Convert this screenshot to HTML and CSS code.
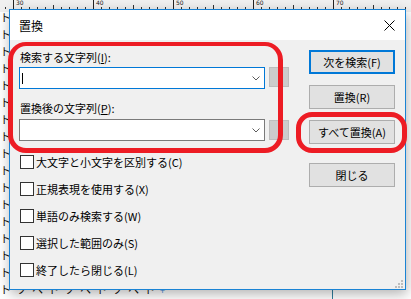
FILE: index.html
```html
<!DOCTYPE html>
<html>
<head>
    <title>置換</title>
    <link rel="stylesheet" href="styles.css">
</head>
<body>
    <div class="desk">
        <div class="ruler">
            <div class="ruler-seg"><span>30</span></div>
            <div class="ruler-seg"><span>40</span></div>
            <div class="ruler-seg"><span>50</span></div>
            <div class="ruler-seg"><span>60</span></div>
            <div class="ruler-seg"><span>70</span></div>
        </div>
        <div class="doc">
            <p>ト</p>
            <p>ト</p>
            <p>ト</p>
            <p>ト</p>
            <p>ト</p>
            <p>ト</p>
            <p>ト</p>
            <p>ト</p>
            <p>ト</p>
            <p>ト</p>
            <p>ト</p>
            <p>ト</p>
            <p>ト</p>
            <p>ト</p>
            <p>ト</p>
            <p>ト</p>
            <p>トソヘトソヘトソヘト<span class="plus">+</span></p>
        </div>

        <div class="dialog">
            <div class="titlebar">
                <span class="title">置換</span>
                <svg class="close" width="11" height="11" viewBox="0 0 11 11">
                    <path d="M0.5 0.5L10.5 10.5M10.5 0.5L0.5 10.5" stroke="#000" stroke-width="1" fill="none"/>
                </svg>
            </div>
            <div class="dlg-body">
                <div class="fields">
                    <div class="field-label">検索する文字列(<u>I</u>):</div>
                    <div class="combo-row">
                        <div class="combo combo-focus">
                            <span class="caret"></span>
                            <svg class="chevron" width="8" height="5" viewBox="0 0 8 5"><path d="M0.5 0.5L4 4L7.5 0.5" stroke="#5c5c5c" fill="none"/></svg>
                        </div>
                        <div class="mini"><span class="mini-glyph"></span></div>
                    </div>
                    <div class="field-label second">置換後の文字列(<u>P</u>):</div>
                    <div class="combo-row">
                        <div class="combo">
                            <svg class="chevron" width="8" height="5" viewBox="0 0 8 5"><path d="M0.5 0.5L4 4L7.5 0.5" stroke="#5c5c5c" fill="none"/></svg>
                        </div>
                        <div class="mini lower"><span class="mini-glyph"></span></div>
                    </div>
                    <ul class="opts">
                        <li><span class="check"></span>大文字と小文字を区別する(C)</li>
                        <li><span class="check"></span>正規表現を使用する(X)</li>
                        <li><span class="check"></span>単語のみ検索する(W)</li>
                        <li><span class="check"></span>選択した範囲のみ(S)</li>
                        <li><span class="check"></span>終了したら閉じる(L)</li>
                    </ul>
                </div>
                <div class="actions">
                    <button class="btn btn-default">次を検索(F)</button>
                    <button class="btn">置換(R)</button>
                    <button class="btn">すべて置換(A)</button>
                    <button class="btn btn-close">閉じる</button>
                </div>
                <svg class="grip" width="8" height="8" viewBox="0 0 8 8">
                    <rect x="6" y="0" width="2" height="2" fill="#bdbdbd"/>
                    <rect x="3" y="3" width="2" height="2" fill="#bdbdbd"/>
                    <rect x="6" y="3" width="2" height="2" fill="#bdbdbd"/>
                    <rect x="0" y="6" width="2" height="2" fill="#bdbdbd"/>
                    <rect x="3" y="6" width="2" height="2" fill="#bdbdbd"/>
                    <rect x="6" y="6" width="2" height="2" fill="#bdbdbd"/>
                </svg>
            </div>
        </div>

        <!-- red hand-drawn highlights -->
        <div class="mark mark-find"></div>
        <div class="mark mark-all"></div>
    </div>
</body>
</html>
```

FILE: styles.css
```css
body {
    margin: 0;
    font-family: "Noto Sans CJK JP", "Noto Sans", sans-serif;
    font-size: 11px;
    color: #000;
    background: #fff;
}
.desk {
    position: relative;
    width: 411px;
    height: 299px;
    overflow: hidden;
}
.ruler {
    display: flex;
    height: 12px;
    padding-left: 13px;
    overflow: hidden;
    background-color: #f0f0f0;
    background-image: repeating-linear-gradient(to right, #333 0 1px, transparent 1px 8px);
    background-size: 100% 2px;
    background-position: 5px 7px;
    background-repeat: no-repeat;
}
.ruler-seg {
    flex: 0 0 79px;
    border-left: 1px solid #222;
    background-image: linear-gradient(#333, #333);
    background-size: 1px 4px;
    background-position: 39px 5px;
    background-repeat: no-repeat;
}
.ruler-seg span {
    display: block;
    margin-left: 2px;
    font-family: "DejaVu Sans", sans-serif;
    font-size: 6px;
    line-height: 6px;
    color: #222;
}
.doc {
    margin-top: -3px;
    height: 290px;
    background: linear-gradient(#2f7f9f, #2f7f9f) no-repeat 332px 0 / 1px 100%;
}
.doc p {
    margin: 0;
    height: 17px;
    line-height: 17px;
    font-size: 11px;
    letter-spacing: 5px;
    white-space: nowrap;
    color: #111;
}
.plus {
    color: #3b8de0;
    font-size: 9px;
}

.dialog {
    position: absolute;
    left: 9px;
    top: 9px;
    width: 395px;
    height: 279px;
    border: 1px solid #1a83d4;
    background: #f0f0f0;
    box-shadow: 1px 4px 12px rgba(0, 0, 0, 0.3);
    display: flex;
    flex-direction: column;
}
.titlebar {
    height: 30px;
    background: #fff;
    display: flex;
    align-items: center;
    justify-content: space-between;
    padding: 0 10px 0 9px;
}
.title {
    font-size: 12px;
    line-height: 14px;
    margin-top: 1px;
}
.dlg-body {
    position: relative;
    flex: 1;
    display: flex;
    padding: 10px 10px 0 9px;
    gap: 20px;
}
.fields {
    width: 270px;
}
.field-label {
    height: 14px;
    line-height: 14px;
    padding-left: 1px;
    margin-bottom: 3px;
}
.field-label.second {
    margin-top: 12px;
    margin-bottom: 4px;
}
.field-label u {
    text-underline-offset: 1px;
}
.combo-row {
    display: flex;
    gap: 4px;
    align-items: flex-start;
}
.combo {
    box-sizing: border-box;
    width: 246px;
    height: 22px;
    border: 1px solid #7a7a7a;
    background: #fff;
    display: flex;
    align-items: center;
    justify-content: space-between;
    padding: 0 4px 0 2px;
}
.combo-focus {
    border-color: #0078d7;
}
.combo .chevron {
    margin-left: auto;
    margin-top: 1px;
}
.caret {
    width: 1px;
    height: 11px;
    background: #000;
}
.mini {
    box-sizing: border-box;
    width: 20px;
    height: 20px;
    background: #cccccc;
    border: 1px solid #bdbdbd;
    display: flex;
    align-items: center;
    justify-content: center;
}
.mini.lower {
    margin-top: 1px;
}
.mini-glyph {
    width: 2px;
    height: 5px;
    margin-top: 2px;
    background: #d6ae86;
}
.opts {
    list-style: none;
    margin: 7px 0 0;
    padding: 0;
}
.opts li {
    height: 27px;
    display: flex;
    align-items: center;
}
.check {
    box-sizing: border-box;
    width: 14px;
    height: 14px;
    border: 1px solid #333;
    background: #fff;
    margin: 0 2px 0 1px;
}
.actions {
    width: 86px;
    display: flex;
    flex-direction: column;
    gap: 11px;
}
.btn {
    box-sizing: border-box;
    width: 86px;
    height: 24px;
    padding: 0;
    background: #e1e1e1;
    border: 1px solid #adadad;
    font-family: "Noto Sans CJK JP", "Noto Sans", sans-serif;
    font-size: 11px;
    line-height: 14px;
    color: #000;
}
.btn-default {
    border: 2px solid #0078d7;
}
.btn-close {
    margin-top: 8px;
}
.grip {
    position: absolute;
    right: 2px;
    bottom: 1px;
}

.mark {
    position: absolute;
    box-sizing: border-box;
    border: 5px solid #ed1c24;
    pointer-events: none;
}
.mark-find {
    left: 8px;
    top: 42px;
    width: 275px;
    height: 111px;
    border-radius: 18px;
    border-top-width: 4px;
}
.mark-all {
    left: 296px;
    top: 112px;
    width: 111px;
    height: 41px;
    border-radius: 16px;
}
```
